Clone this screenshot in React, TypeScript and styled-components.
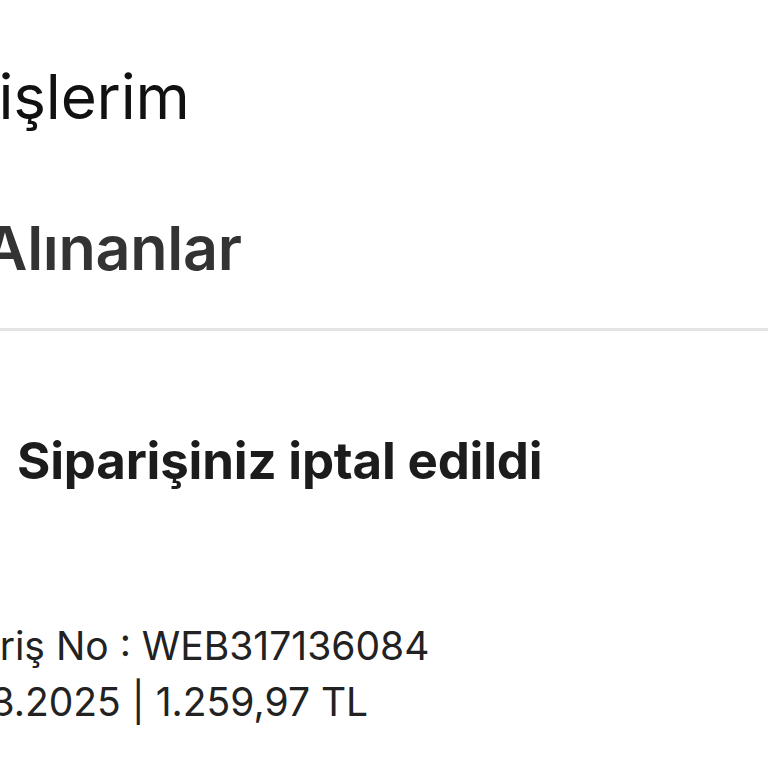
import styled, { createGlobalStyle } from "styled-components";

const GlobalStyle = createGlobalStyle`
  html, body {
    margin: 0;
    padding: 0;
    background: #ffffff;
  }
  body {
    font-family: Inter, "Noto Sans", sans-serif;
    -webkit-font-smoothing: antialiased;
  }
`;

const Page = styled.div`
  width: 768px;
  height: 768px;
  overflow: hidden;
  background: #ffffff;
  display: flex;
  flex-direction: column;
`;

// the screenshot is cropped on the left, so each line is pulled past the edge
const Line = styled.div<{ $shift: number }>`
  margin-left: ${(p) => -p.$shift}px;
  white-space: nowrap;
`;

const Title = styled(Line)`
  margin-top: 57px;
  font-size: 62px;
  line-height: 80px;
  font-weight: 400;
  color: #111111;
  letter-spacing: -0.2px;
`;

const Tab = styled(Line)`
  margin-top: 74px;
  font-size: 61px;
  line-height: 74px;
  font-weight: 600;
  color: #333333;
  letter-spacing: -0.3px;
`;

const Divider = styled.hr`
  margin: 43px 0 0;
  border: none;
  height: 3px;
  background: #e4e4e4;
  width: 100%;
`;

const StatusRow = styled(Line)`
  margin-top: 98px;
  display: flex;
  align-items: center;
  gap: 16px;
`;

const StatusIcon = styled.svg`
  width: 44px;
  height: 44px;
  flex-shrink: 0;
`;

const StatusText = styled.span`
  font-size: 51px;
  line-height: 64px;
  font-weight: 700;
  color: #1c1c1c;
  letter-spacing: -0.2px;
`;

const Info = styled.div`
  margin-top: 125px;
  display: flex;
  flex-direction: column;
`;

const InfoLine = styled(Line)`
  font-size: 39px;
  line-height: 56px;
  font-weight: 400;
  color: #222222;
`;

export default function App() {
  return (
    <>
      <GlobalStyle />
      <Page>
        <Title $shift={153}>Siparişlerim</Title>
        <Tab $shift={180}>Satın Alınanlar</Tab>
        <Divider />
        <StatusRow $shift={43}>
          <StatusIcon viewBox="0 0 24 24" fill="none">
            <circle cx="12" cy="12" r="10" stroke="#d32f2f" strokeWidth="2" />
            <path d="M8 8l8 8M16 8l-8 8" stroke="#d32f2f" strokeWidth="2" strokeLinecap="round" />
          </StatusIcon>
          <StatusText>Siparişiniz iptal edildi</StatusText>
        </StatusRow>
        <Info>
          <InfoLine $shift={81}>Sipariş No : WEB317136084</InfoLine>
          <InfoLine $shift={84}>12.03.2025 | 1.259,97 TL</InfoLine>
        </Info>
      </Page>
    </>
  );
}
